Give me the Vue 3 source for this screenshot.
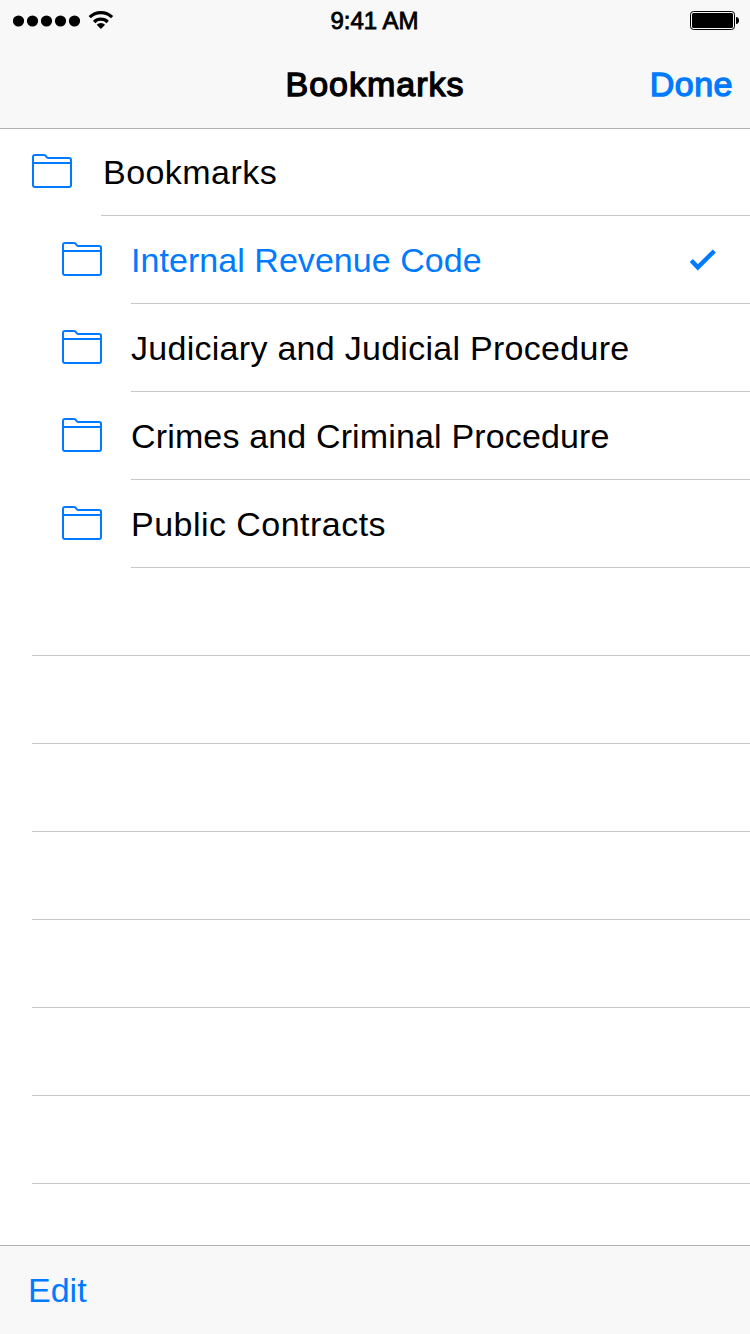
<template>
  <div class="screen">
    <header class="header">
      <div class="status-bar">
        <div class="status-bar__left">
          <svg class="signal" width="68" height="13" viewBox="0 0 68 13">
            <circle v-for="n in 5" :key="n" :cx="n * 14 - 8.5" cy="7" r="5.6" />
          </svg>
          <svg class="wifi" width="26" height="20" viewBox="0 0 26 20">
            <path d="M1.700 7.200a15.800 15.800 0 0 1 22.400 0" />
            <path d="M6.100 12a9.600 9.600 0 0 1 13.600 0" />
            <path class="wifi__dot" d="M12.900 19l-4.200-4.200a5.900 5.900 0 0 1 8.400 0z" />
          </svg>
        </div>
        <div class="status-bar__time">9:41 AM</div>
        <svg class="battery" width="50" height="19" viewBox="0 0 50 19">
          <rect class="battery__case" x="0.5" y="0.5" width="44" height="18" rx="3" />
          <rect x="2" y="2" width="41" height="15" rx="1.5" />
          <path d="M46 6c2 0 3 1.500 3 3.500s-1 3.500-3 3.500z" />
        </svg>
      </div>
      <div class="nav-bar">
        <h1 class="nav-bar__title">Bookmarks</h1>
        <button class="nav-bar__done">Done</button>
      </div>
    </header>

    <ul class="list">
      <li
        v-for="folder in folders"
        :key="folder.id"
        class="row"
        :class="{ 'row--child': folder.depth > 0, 'row--selected': folder.id === selectedId }"
        @click="selectedId = folder.id"
      >
        <svg class="row__icon" width="40" height="34" viewBox="0 0 40 34">
          <path d="M1 31V3q0-2 2-2h9q1.500 0 2.200 1.500t2.300 1.500H37q2 0 2 2v25q0 2-2 2H3q-2 0-2-2z" />
          <path d="M1 9h38" />
        </svg>
        <div class="row__body">
          <span class="row__label" :class="'row__label--' + folder.id">{{ folder.name }}</span>
          <svg
            v-if="folder.id === selectedId"
            class="row__check"
            width="28"
            height="22"
            viewBox="0 0 28 22"
          >
            <path d="M2.300 11.500l6.500 6.800L25.300 2" />
          </svg>
        </div>
      </li>
      <li v-for="n in 7" :key="'empty-' + n" class="row row--empty"></li>
    </ul>

    <footer class="toolbar">
      <button class="toolbar__edit">Edit</button>
    </footer>
  </div>
</template>

<script setup>
import { ref } from 'vue'

const folders = [
  { id: 'root', name: 'Bookmarks', depth: 0 },
  { id: 'revenue', name: 'Internal Revenue Code', depth: 1 },
  { id: 'judiciary', name: 'Judiciary and Judicial Procedure', depth: 1 },
  { id: 'crimes', name: 'Crimes and Criminal Procedure', depth: 1 },
  { id: 'contracts', name: 'Public Contracts', depth: 1 },
]

const selectedId = ref('revenue')
</script>

<style>
body {
  margin: 0;
  background: #fff;
}
</style>

<style scoped>
.screen {
  display: flex;
  flex-direction: column;
  width: 750px;
  height: 1334px;
  overflow: hidden;
  background: #fff;
  color: #000;
  font-family: 'Liberation Sans', Arial, sans-serif;
  font-size: 34px;
}

button {
  padding: 0;
  border: 0;
  background: none;
  color: #007aff;
  font: inherit;
}

.header {
  flex: none;
  box-sizing: border-box;
  height: 129px;
  border-bottom: 1px solid #b2b2b2;
  background: #f8f8f8;
}

.status-bar {
  display: grid;
  grid-template-columns: 1fr auto 1fr;
  align-items: center;
  height: 40px;
  padding: 0 10px 0 13px;
}

.status-bar__left {
  display: flex;
  align-items: center;
  gap: 7px;
}

.wifi path {
  fill: none;
  stroke: #000;
  stroke-width: 3.2;
}

.wifi .wifi__dot {
  fill: #000;
  stroke: none;
}

.status-bar__time {
  padding: 2px 4px 0 0;
  font-size: 24px;
  line-height: 38px;
  -webkit-text-stroke: 0.8px #000;
}

.battery {
  justify-self: end;
}

.battery__case {
  fill: none;
  stroke: #000;
}

.nav-bar {
  display: grid;
  grid-template-columns: 1fr auto 1fr;
  align-items: center;
  height: 88px;
  padding: 0 17px;
}

.nav-bar__title {
  grid-column: 2;
  margin: 0;
  font-size: 34px;
  font-weight: 400;
  letter-spacing: 1px;
  -webkit-text-stroke: 1.3px #000;
}

.nav-bar__done {
  justify-self: end;
  letter-spacing: 0.5px;
  -webkit-text-stroke: 1.3px #007aff;
}

.list {
  flex: 1;
  min-height: 0;
  margin: -1px 0 0;
  padding: 0;
  overflow: hidden;
  list-style: none;
}

.row {
  display: flex;
  height: 88px;
  padding-left: 32px;
}

.row--child {
  padding-left: 62px;
}

.row__icon {
  flex: none;
  margin: 26px 29px 0 0;
  fill: none;
  stroke: #007aff;
  stroke-width: 2;
}

.row__body {
  display: flex;
  flex: 1;
  align-items: center;
  justify-content: space-between;
  box-sizing: border-box;
  padding-right: 33px;
  border-bottom: 1px solid #c8c7cc;
}

.row__label {
  padding-top: 2px;
  white-space: nowrap;
}

.row__label--root {
  padding-left: 2px;
  letter-spacing: 0.45px;
}

.row__label--revenue {
  letter-spacing: 0.05px;
}

.row__label--judiciary {
  letter-spacing: 0.28px;
}

.row__label--crimes {
  letter-spacing: 0.15px;
}

.row__label--contracts {
  letter-spacing: 0.47px;
}

.row--selected .row__label {
  color: #007aff;
}

.row__check {
  fill: none;
  stroke: #007aff;
  stroke-width: 4.4;
}

.row--empty {
  box-sizing: border-box;
  margin-left: 32px;
  padding: 0;
  border-bottom: 1px solid #c8c7cc;
}

.toolbar {
  display: flex;
  flex: none;
  align-items: center;
  box-sizing: border-box;
  height: 89px;
  padding-left: 28px;
  border-top: 1px solid #b2b2b2;
  background: #f8f8f8;
}
</style>
